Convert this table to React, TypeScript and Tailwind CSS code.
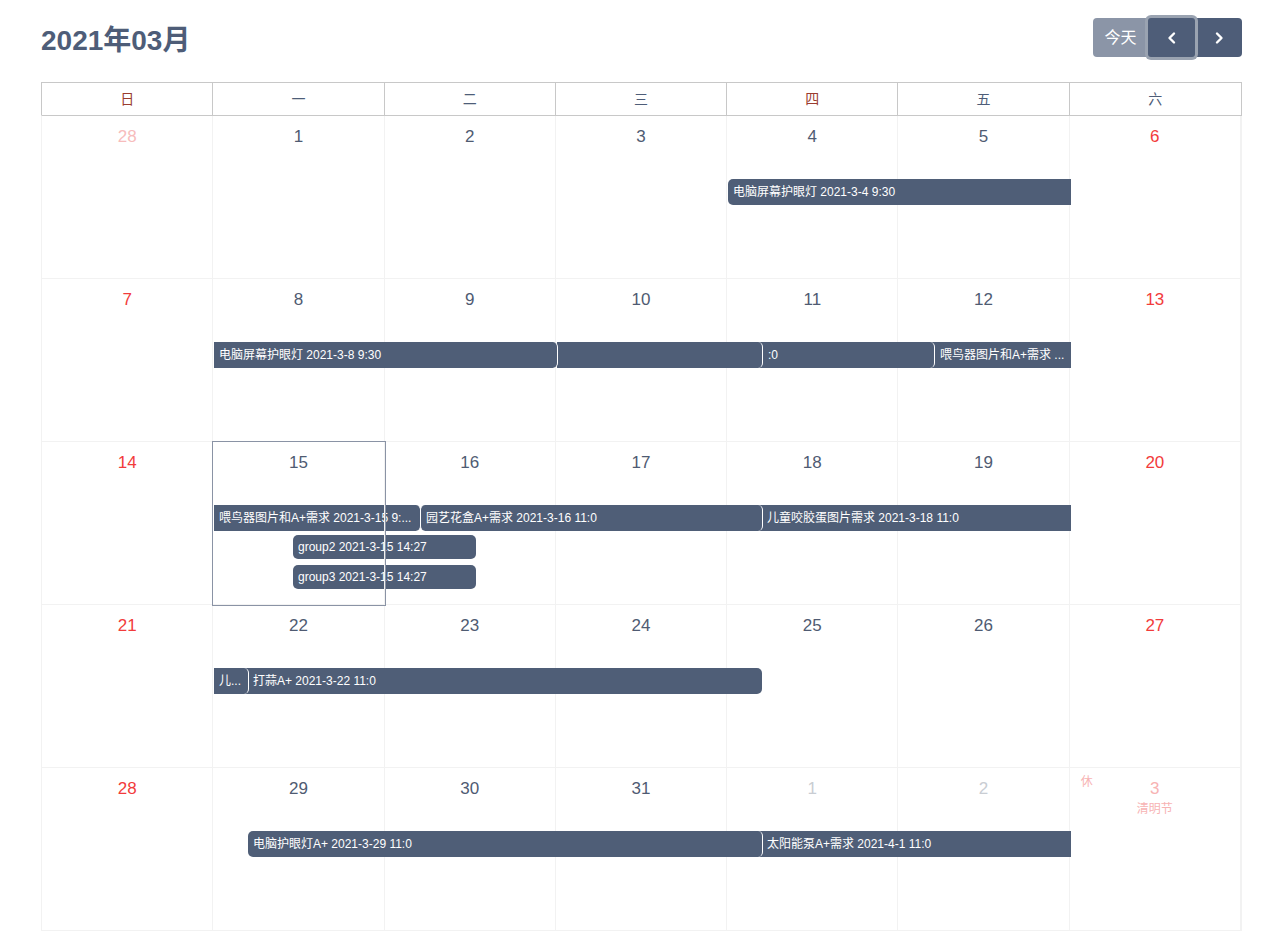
import React from "react";

type Day = { n: number; kind: "cur" | "prevSun" | "next" | "nextHol"; red?: boolean };
type Ev = {
  text: string;
  left: number; // px
  right: number; // px
  top: number; // px within row
  h?: number;
  rl?: boolean; // rounded left
  rr?: boolean; // rounded right
  bl?: boolean; // white border left
  br?: boolean; // white border right
};

const x = (v: number) => v - 41;

const weeks: Day[][] = [
  [
    { n: 28, kind: "prevSun" },
    { n: 1, kind: "cur" },
    { n: 2, kind: "cur" },
    { n: 3, kind: "cur" },
    { n: 4, kind: "cur" },
    { n: 5, kind: "cur" },
    { n: 6, kind: "cur", red: true },
  ],
  [7, 8, 9, 10, 11, 12, 13].map((n, i) => ({ n, kind: "cur" as const, red: i === 0 || i === 6 })),
  [14, 15, 16, 17, 18, 19, 20].map((n, i) => ({ n, kind: "cur" as const, red: i === 0 || i === 6 })),
  [21, 22, 23, 24, 25, 26, 27].map((n, i) => ({ n, kind: "cur" as const, red: i === 0 || i === 6 })),
  [
    { n: 28, kind: "cur", red: true },
    { n: 29, kind: "cur" },
    { n: 30, kind: "cur" },
    { n: 31, kind: "cur" },
    { n: 1, kind: "next" },
    { n: 2, kind: "next" },
    { n: 3, kind: "nextHol" },
  ],
];

const events: Ev[][] = [
  [{ text: "电脑屏幕护眼灯 2021-3-4 9:30", left: x(727), right: x(1070), top: 63, rl: true }],
  [
    { text: "", left: x(556), right: x(1070), top: 63 },
    { text: "喂鸟器图片和A+需求 ...", left: x(933), right: x(1070), top: 63 },
    { text: ":0", left: x(761), right: x(934), top: 63, rr: true, br: true },
    { text: "", left: x(556), right: x(762), top: 63, rr: true, br: true },
    { text: "电脑屏幕护眼灯 2021-3-8 9:30", left: x(213), right: x(557), top: 63, rr: true, br: true },
  ],
  [
    { text: "儿童咬胶蛋图片需求 2021-3-18 11:0", left: x(740), right: x(1070), top: 63 },
    { text: "园艺花盒A+需求 2021-3-16 11:0", left: x(419), right: x(762), top: 63, rl: true, rr: true, bl: true, br: true },
    { text: "喂鸟器图片和A+需求 2021-3-15 9:...", left: x(213), right: x(420), top: 63, rr: true, br: true },
    { text: "group2 2021-3-15 14:27", left: x(292), right: x(475), top: 93, h: 24, rl: true, rr: true },
    { text: "group3 2021-3-15 14:27", left: x(292), right: x(475), top: 123, h: 24, rl: true, rr: true },
  ],
  [
    { text: "打蒜A+ 2021-3-22 11:0", left: x(240), right: x(761), top: 63, rr: true },
    { text: "儿...", left: x(213), right: x(248), top: 63, rr: true, br: true },
  ],
  [
    { text: "太阳能泵A+需求 2021-4-1 11:0", left: x(740), right: x(1070), top: 63 },
    { text: "电脑护眼灯A+ 2021-3-29 11:0", left: x(247), right: x(762), top: 63, rl: true, rr: true, br: true },
  ],
];

// texts of underlying bars that start behind others need left padding to show at visible start
const textOffset: Record<string, number> = {
  "儿童咬胶蛋图片需求 2021-3-18 11:0": 21,
  "打蒜A+ 2021-3-22 11:0": 7,
  "太阳能泵A+需求 2021-4-1 11:0": 21,
  "喂鸟器图片和A+需求 ...": 1,
  ":0": 1,
};

const heads = ["日", "一", "二", "三", "四", "五", "六"];

function Bar({ e }: { e: Ev }) {
  const cls = [
    "absolute overflow-hidden whitespace-nowrap bg-[#4f5e77] text-white text-[12px] pr-[4px] box-border",
    e.rl ? "rounded-l-[5px]" : "",
    e.rr ? "rounded-r-[5px]" : "",
    e.bl ? "border-l border-l-white" : "",
    e.br ? "border-r border-r-white" : "",
  ].join(" ");
  const h = e.h ?? 26;
  return (
    <div
      className={cls}
      style={{
        left: e.left,
        width: e.right - e.left,
        top: e.top,
        height: h,
        lineHeight: `${h}px`,
        paddingLeft: 5 + (textOffset[e.text] ?? 0),
      }}
    >
      {e.text}
    </div>
  );
}

function DayCell({ d, selected }: { d: Day; selected?: boolean }) {
  let color = "text-[#4f5b72]";
  if (d.kind === "prevSun") color = "text-[#f7bcbc]";
  else if (d.kind === "next") color = "text-[#c9cdd3]";
  else if (d.kind === "nextHol") color = "text-[#f7b3b3]";
  else if (d.red) color = "text-[#f23b3b]";
  return (
    <div
      className={
        "relative h-[163px] border-r border-b border-[#f2f2f2] last:border-r-0 " +
        (selected ? "outline outline-1 outline-[#8a93a5] outline-offset-0 z-10" : "")
      }
    >
      <div className={"pt-[9px] text-center text-[17px] leading-[24px] " + color}>{d.n}</div>
      {d.kind === "nextHol" && (
        <>
          <div className="absolute left-[11px] top-[5px] text-[12px] text-[#f7b3b3]">休</div>
          <div className="text-center text-[12px] leading-[16px] text-[#f7b3b3]">清明节</div>
        </>
      )}
    </div>
  );
}

export default function App() {
  return (
    <div
      className="w-[1265px] h-[939px] bg-white overflow-hidden"
      style={{ fontFamily: '"Liberation Sans", Arial, "Noto Sans CJK SC", sans-serif' }}
    >
      <div className="ml-[41px] w-[1201px]">
        <div className="flex items-center justify-between pt-[18px] h-[57px]">
          <h1 className="mt-[5px] text-[28px] font-bold text-[#4e5d78] leading-[39px]">2021年03月</h1>
          <div className="flex h-[39px]">
            <button className="w-[55px] h-[39px] bg-[#8b95a7] text-white text-[16px] rounded-l-[4px]">今天</button>
            <button className="relative w-[47px] h-[39px] bg-[#4e5d78] text-white rounded-[3px] ring-[3px] ring-[#9aa3b1] z-10 flex items-center justify-center">
              <svg width="14" height="14" viewBox="0 0 14 14" fill="none">
                <path d="M9 2.5L4.5 7L9 11.5" stroke="white" strokeWidth="2.4" strokeLinecap="round" strokeLinejoin="round" />
              </svg>
            </button>
            <button className="w-[47px] h-[39px] bg-[#4e5d78] text-white rounded-r-[4px] flex items-center justify-center">
              <svg width="14" height="14" viewBox="0 0 14 14" fill="none">
                <path d="M5 2.5L9.5 7L5 11.5" stroke="white" strokeWidth="2.4" strokeLinecap="round" strokeLinejoin="round" />
              </svg>
            </button>
          </div>
        </div>
        <div className="mt-[25px] border border-[#c8c8c8] border-b-0">
          <div className="grid grid-cols-7">
            {heads.map((h, i) => (
              <div
                key={h}
                className={
                  "h-[32px] flex items-center justify-center text-[14px] border-r border-[#c8c8c8] last:border-r-0 " +
                  (i === 0 || i === 4 ? "text-[#9a3c2f]" : "text-[#4e5d78]")
                }
              >
                {h}
              </div>
            ))}
          </div>
        </div>
        <div className="border-l border-[#f2f2f2] border-t border-t-[#c8c8c8]">
          {weeks.map((w, wi) => (
            <div key={wi} className="relative grid grid-cols-7 border-r border-[#f2f2f2]">
              {w.map((d, di) => (
                <DayCell key={di} d={d} selected={wi === 2 && di === 1} />
              ))}
              {events[wi].map((e, ei) => (
                <Bar key={ei} e={e} />
              ))}
            </div>
          ))}
        </div>
      </div>
    </div>
  );
}
